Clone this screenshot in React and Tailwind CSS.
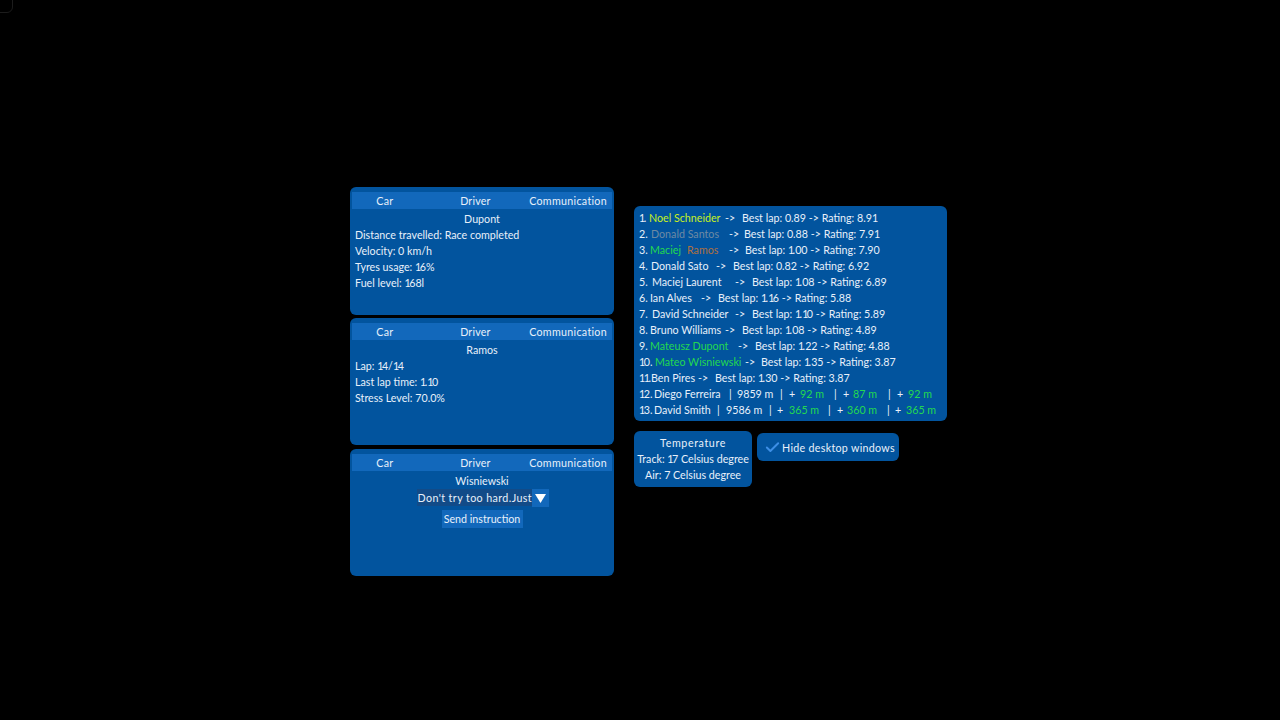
import React from "react";
import { Check } from "lucide-react";

const font = "font-['Lato','Liberation_Sans',sans-serif] text-[10.7px] leading-4 text-[#e8f0fa]";
const G = "text-[#22d94f]";

// The reference's typeface has a narrow "1".
function N({ children }) {
  return String(children)
    .split(/(1)/)
    .map((part, i) =>
      part === "1" ? (
        <span key={i} className="tracking-[-1.5px]">1</span>
      ) : (
        <span key={i}>{part}</span>
      )
    );
}

function Tabs() {
  return (
    <div className="flex h-[17px] items-center bg-[#1268bb] text-[#e8f0fa]">
      <div className="w-[66px] text-center tracking-[0.3px]">Car</div>
      <div className="ml-[2px] w-[112px] text-center tracking-[0.2px]">Driver</div>
      <div className="ml-[-2px] flex-1 pr-[5px] text-right tracking-[0.3px]">Communication</div>
    </div>
  );
}

function Panel({ title, children, className }) {
  return (
    <div className={`rounded-md bg-[#02549e] px-[2px] pt-[5px] ${className}`}>
      <Tabs />
      <div className="pt-[2px] text-center">{title}</div>
      {children}
    </div>
  );
}

function Lines({ items }) {
  return (
    <div className="pl-[3px]">
      {items.map((t) => (
        <div key={t}>
          <N>{t}</N>
        </div>
      ))}
    </div>
  );
}

// Each row: [start x, text, colour class]; a cell's width comes from the next cell's start.
const rows = [
  [[639, "1."], [649, "Noel Schneider", "text-[#c6ef1f]"], [725, "->"], [742, "Best lap: 0.89 -> Rating: 8.91"]],
  [[639, "2."], [651, "Donald Santos", "text-[#6f8aa3]"], [729, "->"], [744, "Best lap: 0.88 -> Rating: 7.91"]],
  [[639, "3."], [650, "Maciej", G], [687, "Ramos", "text-[#b0703f]"], [729, "->"], [745, "Best lap: 1.00 -> Rating: 7.90"]],
  [[639, "4."], [651, "Donald Sato"], [716, "->"], [733, "Best lap: 0.82 -> Rating: 6.92"]],
  [[639, "5."], [652, "Maciej Laurent"], [735, "->"], [752, "Best lap: 1.08 -> Rating: 6.89"]],
  [[639, "6."], [650, "Ian Alves"], [701, "->"], [718, "Best lap: 1.16 -> Rating: 5.88"]],
  [[639, "7."], [652, "David Schneider"], [735, "->"], [752, "Best lap: 1.10 -> Rating: 5.89"]],
  [[639, "8."], [650, "Bruno Williams"], [725, "->"], [742, "Best lap: 1.08 -> Rating: 4.89"]],
  [[639, "9."], [650, "Mateusz Dupont", G], [738, "->"], [755, "Best lap: 1.22 -> Rating: 4.88"]],
  [[639, "10."], [655, "Mateo Wisniewski", G], [745, "->"], [761, "Best lap: 1.35 -> Rating: 3.87"]],
  [[639, "11."], [651, "Ben Pires"], [698, "->"], [715, "Best lap: 1.30 -> Rating: 3.87"]],
  [[639, "12."], [654, "Diego Ferreira"], [729, "|"], [737, "9859 m"], [780, "|"], [789, "+"], [800, "92 m", G], [834, "|"], [843, "+"], [853, "87 m", G], [888, "|"], [897, "+"], [908, "92 m", G]],
  [[639, "13."], [654, "David Smith"], [717, "|"], [726, "9586 m"], [769, "|"], [777, "+"], [789, "365 m", G], [828, "|"], [837, "+"], [847, "360 m", G], [887, "|"], [895, "+"], [906, "365 m", G]],
];

function Row({ cells }) {
  return (
    <div className="flex whitespace-pre">
      {cells.map(([x, text, color], i) => {
        const next = cells[i + 1];
        return (
          <div key={i} className={color} style={next ? { width: next[0] - x } : undefined}>
            <N>{text}</N>
          </div>
        );
      })}
    </div>
  );
}

export default function App() {
  return (
    <div className={`relative flex h-screen gap-5 overflow-hidden bg-black pl-[350px] pt-[187px] ${font}`}>
      <div className="absolute left-[-10px] top-[-10px] h-[23px] w-[23px] rounded-md border border-[#1c1c1c]" />
      <div className="flex w-[264px] flex-col gap-[3px]">
        <Panel title="Dupont" className="h-[128px]">
          <Lines items={["Distance travelled: Race completed", "Velocity: 0 km/h", "Tyres usage: 16%", "Fuel level: 168l"]} />
        </Panel>
        <Panel title="Ramos" className="h-[127px]">
          <Lines items={["Lap: 14/14", "Last lap time: 1.10", "Stress Level: 70.0%"]} />
        </Panel>
        <Panel title="Wisniewski" className="mt-[1px] h-[127px]">
          <div className="flex justify-center pl-[1px]">
            <div className="h-[17px] w-[115px] whitespace-nowrap bg-[#124b88] pl-[1px] text-left leading-[17px] tracking-[0.4px]">
              Don't try too hard.Just
            </div>
            <div className="flex h-[18px] w-[17px] items-center justify-center bg-[#1268bb]">
              <svg width="11" height="9" viewBox="0 0 11 9"><path d="M0 0H11L5.5 9Z" fill="#fff" /></svg>
            </div>
          </div>
          <div className="mt-[3px] flex justify-center">
            <div className="h-[18px] w-[81px] bg-[#1268bb] text-center leading-[18px]">Send instruction</div>
          </div>
        </Panel>
      </div>
      <div className="flex flex-col pt-[19px]">
        <div className="h-[215px] w-[313px] rounded-md bg-[#02549e] pl-[5px] pt-[4px]">
          {rows.map((cells, i) => (
            <Row key={i} cells={cells} />
          ))}
        </div>
        <div className="mt-[10px] flex items-start gap-[5px]">
          <div className="h-[56px] w-[118px] rounded-md bg-[#02549e] pt-[4px] text-center">
            <div className="tracking-[0.6px]">Temperature</div>
            <div><N>Track: 17 Celsius degree</N></div>
            <div>Air: 7 Celsius degree</div>
          </div>
          <div className="mt-[2px] flex h-[28px] w-[142px] items-center rounded-md bg-[#02549e] pl-[7px]">
            <Check size={17} strokeWidth={2.75} className="text-[#3d8fe6]" />
            <span className="ml-[1px] mt-[1px] tracking-[0.3px]">Hide desktop windows</span>
          </div>
        </div>
      </div>
    </div>
  );
}
